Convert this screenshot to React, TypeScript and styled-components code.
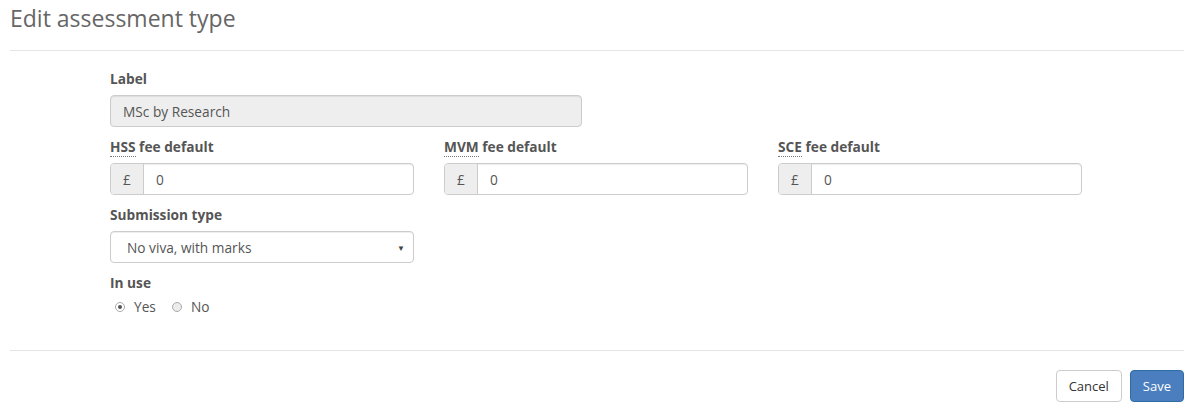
import React from 'react'
import styled, { createGlobalStyle } from 'styled-components'

const GlobalStyle = createGlobalStyle`
  body {
    margin: 0;
    background: #fff;
    font-family: "Open Sans", "Liberation Sans", sans-serif;
    color: #555;
  }
`

const Page = styled.div`
  padding: 0 16px 0 10px;
  width: 1200px;
  box-sizing: border-box;
`

const Header = styled.div`
  height: 50px;
  border-bottom: 1px solid #e5e5e5;
  display: flex;
  align-items: center;
`

const Title = styled.h1`
  margin: 0 0 14px;
  font-size: 23px;
  font-weight: 400;
  color: #666;
  line-height: 1;
`

const Body = styled.div`
  padding: 19px 0 23px 100px;
  border-bottom: 1px solid #e5e5e5;
`

const Row = styled.div`
  display: flex;
  gap: 30px;
`

const Group = styled.div<{ $width: number }>`
  width: ${p => p.$width}px;
  margin-bottom: 11px;
`

const Label = styled.div`
  font-size: 13.7px;
  font-weight: 700;
  line-height: 18px;
  color: #555;
  margin-bottom: 7px;
`

const Abbr = styled.span`
  border-bottom: 1px dotted #777;
`

const TextInput = styled.div<{ $disabled?: boolean }>`
  height: 32px;
  box-sizing: border-box;
  border: 1px solid #ccc;
  border-radius: 4px;
  background: ${p => (p.$disabled ? '#eee' : '#fff')};
  display: flex;
  align-items: center;
  padding: 0 12px;
  font-size: 13.7px;
  color: #555;
  box-shadow: inset 0 1px 1px rgba(0, 0, 0, 0.075);
`

const InputGroup = styled.div`
  display: flex;
  height: 32px;
  border: 1px solid #ccc;
  border-radius: 4px;
  box-sizing: border-box;
  overflow: hidden;
  font-size: 13.7px;
  box-shadow: inset 0 1px 1px rgba(0, 0, 0, 0.075);
`

const Addon = styled.div`
  width: 32px;
  background: #eee;
  border-right: 1px solid #ccc;
  display: flex;
  align-items: center;
  justify-content: center;
  color: #555;
`

const AddonInput = styled.div`
  flex: 1;
  display: flex;
  align-items: center;
  padding: 0 12px;
  color: #555;
`

const Select = styled(TextInput)`
  justify-content: space-between;
  padding: 0 8px 0 16px;
`

const Caret = styled.span`
  font-size: 8px;
  color: #444;
`

const Radios = styled.div`
  display: flex;
  align-items: center;
  gap: 16px;
  padding-left: 5px;
  margin-top: -2px;
  font-size: 13.7px;
`

const RadioOption = styled.label`
  display: flex;
  align-items: center;
  gap: 9px;
  color: #555;
`

const RadioDot = styled.span<{ $checked?: boolean }>`
  width: 10px;
  height: 10px;
  border-radius: 50%;
  border: 1px solid #aaa;
  background: ${p => (p.$checked ? '#fff' : '#ececec')};
  display: inline-flex;
  align-items: center;
  justify-content: center;
  box-sizing: border-box;
  &::after {
    content: '';
    width: 4px;
    height: 4px;
    border-radius: 50%;
    background: ${p => (p.$checked ? '#555' : 'transparent')};
  }
`

const Footer = styled.div`
  display: flex;
  justify-content: flex-end;
  gap: 8px;
  padding-top: 19px;
`

const Button = styled.button<{ $primary?: boolean }>`
  font-family: inherit;
  font-size: 13px;
  height: 32px;
  padding: 0 12px;
  border-radius: 4px;
  border: 1px solid ${p => (p.$primary ? '#2e6da4' : '#ccc')};
  background: ${p => (p.$primary ? '#4a7ebf' : '#fff')};
  color: ${p => (p.$primary ? '#fff' : '#333')};
`

const fees = ['HSS', 'MVM', 'SCE']

export default function App() {
  return (
    <Page>
      <GlobalStyle />
      <Header>
        <Title>Edit assessment type</Title>
      </Header>
      <Body>
        <Group $width={472}>
          <Label>Label</Label>
          <TextInput $disabled>MSc by Research</TextInput>
        </Group>
        <Row>
          {fees.map(f => (
            <Group $width={304} key={f}>
              <Label>
                <Abbr>{f}</Abbr> fee default
              </Label>
              <InputGroup>
                <Addon>£</Addon>
                <AddonInput>0</AddonInput>
              </InputGroup>
            </Group>
          ))}
        </Row>
        <Group $width={304}>
          <Label>Submission type</Label>
          <Select>
            No viva, with marks
            <Caret>▼</Caret>
          </Select>
        </Group>
        <Group $width={304}>
          <Label>In use</Label>
          <Radios>
            <RadioOption>
              <RadioDot $checked />
              Yes
            </RadioOption>
            <RadioOption>
              <RadioDot />
              No
            </RadioOption>
          </Radios>
        </Group>
      </Body>
      <Footer>
        <Button>Cancel</Button>
        <Button $primary>Save</Button>
      </Footer>
    </Page>
  )
}
